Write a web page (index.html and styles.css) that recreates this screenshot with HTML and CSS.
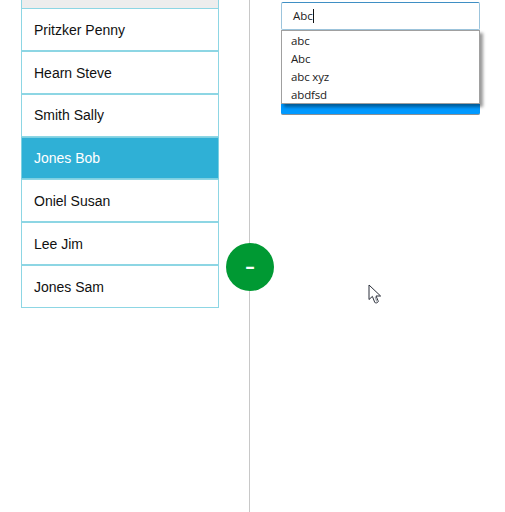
FILE: index.html
```html
<!DOCTYPE html>
<html lang="en">
<head>
  <meta charset="UTF-8" />
  <title>People</title>
  <link rel="stylesheet" href="styles.css">
</head>
<body>
  <div class="page">
    <div class="left-pane">
      <ul class="people">
        <li class="people-head"></li>
        <li class="person">Pritzker Penny</li>
        <li class="person">Hearn Steve</li>
        <li class="person">Smith Sally</li>
        <li class="person selected">Jones Bob</li>
        <li class="person">Oniel Susan</li>
        <li class="person">Lee Jim</li>
        <li class="person">Jones Sam</li>
      </ul>
    </div>

    <div class="right-pane">
      <div class="combo">
        <div class="combo-input">Abc<span class="caret"></span></div>
        <div class="combo-menu">
          <div class="combo-item">abc</div>
          <div class="combo-item">Abc</div>
          <div class="combo-item">abc xyz</div>
          <div class="combo-item">abdfsd</div>
        </div>
      </div>
      <button class="save-button"></button>
    </div>

    <div class="round-button">-</div>

    <svg class="pointer" width="14" height="21" viewBox="0 0 14 21">
      <path d="M1 1 L1 15.5 L4.4 12.4 L6.6 18 Q7.2 19.4 8.5 18.9 L9.6 18.4 Q10.6 17.9 10.1 16.8 L8 12 L12.6 12 Z" fill="#fff" stroke="#2b2f3a" stroke-width="1" stroke-linejoin="round" />
      <path d="M7.2 13 L9 17.4" stroke="#a4a8ae" stroke-width="1.4" fill="none" />
    </svg>
  </div>
</body>
</html>
```

FILE: styles.css
```css
body {
  margin: 0;
  background: #fff;
  font-family: "Liberation Sans", Arial, sans-serif;
}

.page {
  position: relative;
  display: flex;
  height: 512px;
  overflow: hidden;
}

.left-pane {
  box-sizing: border-box;
  width: 250px;
  padding: 0 30px 0 21px;
  border-right: 1px solid #c8c8c8;
}

.people {
  list-style: none;
  margin: 0;
  padding: 0;
}

.people-head {
  box-sizing: border-box;
  height: 8.1px;
  background: #ededed;
  border: 1px solid #8dd6e4;
  border-width: 0 1px;
}

.person {
  box-sizing: border-box;
  height: 42.857px;
  line-height: 40px;
  padding: 0.6px 0 0 12px;
  font-size: 14px;
  color: #111;
  background: #fff;
  border: 1px solid #8dd6e4;
}

.person.selected {
  background: #2fb0d6;
  color: #fff;
  border-color: #7dd0e2;
}

.right-pane {
  width: 199px;
  margin-left: 31px;
  padding-top: 2px;
}

.combo {
  position: relative;
}

.combo-input {
  box-sizing: border-box;
  height: 28px;
  line-height: 26px;
  padding-left: 11px;
  font-family: "Open Sans", sans-serif;
  font-size: 11.5px;
  color: #222;
  border: 1px solid #9cc4dc;
  border-top-color: #3f8fc4;
  border-radius: 2px;
}

.caret {
  display: inline-block;
  width: 1px;
  height: 14px;
  background: #111;
  vertical-align: -3px;
}

.combo-menu {
  position: absolute;
  top: 28px;
  left: 0;
  right: 0;
  box-sizing: border-box;
  height: 74px;
  padding: 1px 0 0 9px;
  background: #fff;
  border: 1px solid #a0a0a0;
  box-shadow: 3px 3px 3px rgba(0, 0, 0, 0.4);
  z-index: 2;
}

.combo-item {
  height: 18px;
  line-height: 18px;
  font-family: "Open Sans", sans-serif;
  font-size: 11.5px;
  letter-spacing: -0.15px;
  color: #222;
}

.save-button {
  display: block;
  width: 100%;
  height: 84px;
  margin-top: 1px;
  padding: 0;
  background: #0099ff;
  border: none;
  border-bottom: 1px solid #8a8f94;
  border-radius: 2px;
}

.round-button {
  position: absolute;
  left: 226px;
  top: 243px;
  width: 48px;
  height: 48px;
  border-radius: 50%;
  background: #009933;
  color: #fff;
  font-family: Inter, sans-serif;
  font-size: 24px;
  font-weight: 500;
  line-height: 47px;
  text-align: center;
}

.pointer {
  position: absolute;
  left: 368px;
  top: 284px;
}
```
